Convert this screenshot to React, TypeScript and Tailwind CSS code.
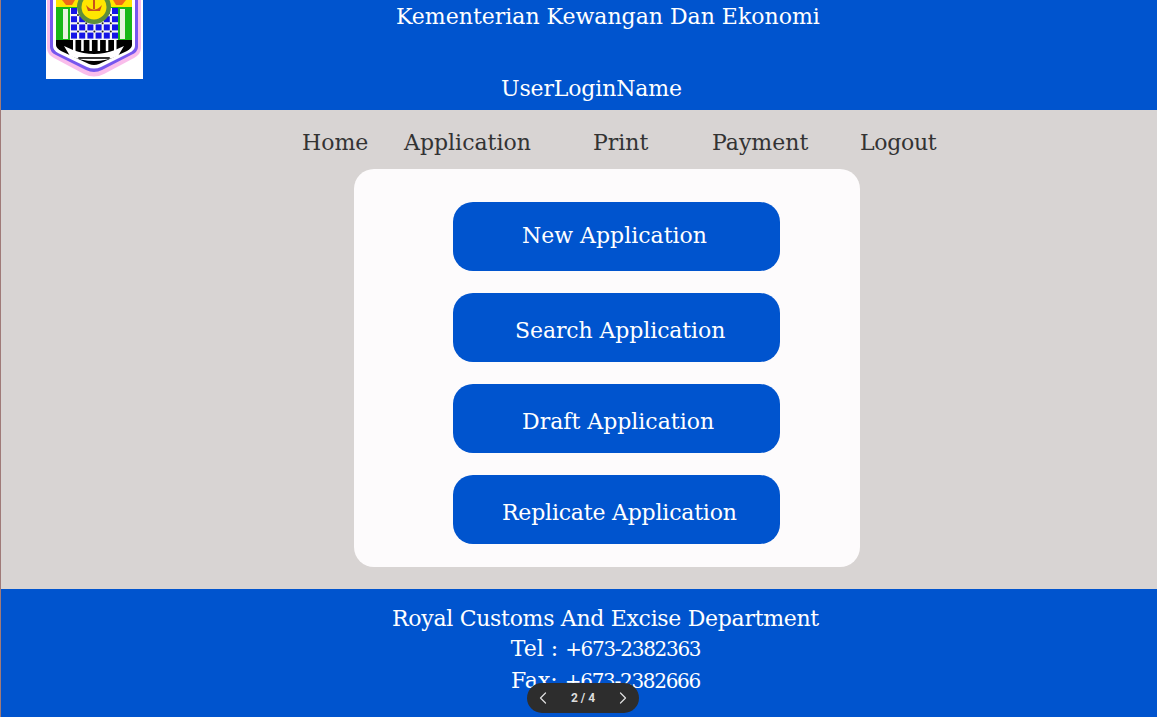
import React from "react";
import { ChevronLeft, ChevronRight } from "lucide-react";

const font = "font-['DejaVu_Serif',serif]";

const Logo: React.FC = () => (
  <svg width="97" height="79" viewBox="0 0 97 79" className="block blur-[0.4px]">
    <rect width="97" height="79" fill="#ffffff" />
    <path d="M1 0 V48 Q1 54 8 58 L38 74 Q48 79 58 74 L88 58 Q95 54 95 48 V0 Z" fill="#f9bdeb" />
    <path d="M4 0 V47 Q4 52 10 55 L40 70 Q48 74 56 70 L85 55 Q92 52 92 47 V0 Z" fill="#7657ee" />
    <path d="M7 0 V46 Q7 50 12 53 L41 67 Q48 70 55 67 L83 53 Q89 50 89 46 V0 Z" fill="#ffffff" />
    <path d="M10 0 H86 V45 Q86 48 81 51 L53 64 Q48 66 43 64 L15 51 Q10 48 10 45 Z" fill="#000000" />
    <rect x="10" y="0" width="76" height="8" fill="#ffe600" />
    <rect x="10" y="7" width="76" height="33" fill="#18b818" />
    <path d="M16 0 H29 L26 5 H20 Z" fill="#f06a18" />
    <path d="M67 0 H80 L76 5 H70 Z" fill="#f06a18" />
    <rect x="24" y="8" width="48" height="32" fill="#f4f4f4" />
    {[0, 1, 2, 3, 4, 5].map((c) =>
      [0, 1, 2, 3].map((r) => (
        <rect key={`${c}-${r}`} x={25 + c * 8.2} y={8 + r * 8.2} width="6" height="6" fill="#1414e6" />
      ))
    )}
    {[0, 1, 2, 3, 4].map((c) =>
      [0, 1, 2].map((r) => (
        <circle key={`${c}-${r}`} cx={32 + c * 8.2} cy={15 + r * 8.2} r="1" fill="#222222" />
      ))
    )}
    {[0, 1, 2, 3, 4, 5].map((c) => (
      <rect key={c} x={27 + c * 8.2} y="40" width="2.5" height="11" fill="#ffffff" />
    ))}
    <circle cx="48" cy="7" r="17" fill="#5f8f3a" />
    <circle cx="48" cy="7" r="12.5" fill="#ffe600" />
    <path d="M40 5 Q48 14 56 5 L54 11 H42 Z M47 0 H49 V9 H47 Z" fill="#c8501c" />
    <path d="M17 9 h5 v30 h-5 Z M74 9 h5 v30 h-5 Z" fill="#e8f3e0" />
    <path d="M18 46 L27 50 Q48 58 69 50 L78 46 L72 56 Q48 66 24 56 Z" fill="#ffffff" />
    <rect x="32" y="57" width="32" height="2" rx="1" fill="#333333" />
  </svg>
);

const navItems = [
  { label: "Home", cls: "w-[102px]" },
  { label: "Application", cls: "w-[189px]" },
  { label: "Print", cls: "w-[119px]" },
  { label: "Payment", cls: "w-[148px]" },
  { label: "Logout", cls: "tracking-[-0.3px]" },
];

const buttons = [
  { label: "New Application", cls: "pl-[69px] pb-[3px]" },
  { label: "Search Application", cls: "pl-[62px] pt-[5px] tracking-[-0.1px]" },
  { label: "Draft Application", cls: "pl-[69px] pt-[5px]" },
  { label: "Replicate Application", cls: "pl-[49px] pt-[5px] tracking-[-0.2px]" },
];

export default function App() {
  return (
    <div className={`relative h-[717px] overflow-hidden border-l border-[#a07a78] bg-[#d8d4d3] ${font}`}>
      <header className="relative h-[110px] overflow-hidden bg-[#0054ce] text-white">
        <div className="pl-[45px]">
          <Logo />
        </div>
        <div className="absolute left-[395px] top-[2px] text-[22px] leading-[30px] whitespace-nowrap">
          Kementerian Kewangan Dan Ekonomi
        </div>
        <div className="absolute left-[500px] top-[74px] text-[22px] leading-[30px] tracking-[-0.15px] whitespace-nowrap">
          UserLoginName
        </div>
      </header>

      <nav className="flex h-[59px] items-start pl-[301px] pt-[18px] text-[22px] leading-[30px] text-[#333333]">
        {navItems.map((n) => (
          <div key={n.label} className={n.cls}>
            {n.label}
          </div>
        ))}
      </nav>

      <main className="ml-[353px] flex h-[398px] w-[506px] flex-col items-center gap-[22px] rounded-[20px] bg-[#fdfbfc] pl-[19px] pt-[33px]">
        {buttons.map((b) => (
          <div
            key={b.label}
            className={`flex h-[69px] w-[327px] shrink-0 items-center rounded-[20px] bg-[#0054ce] text-[22px] text-white ${b.cls}`}
          >
            {b.label}
          </div>
        ))}
      </main>

      <footer className="mt-[22px] flex h-[128px] flex-col items-center bg-[#0054ce] pl-[53px] pt-[14px] text-[22px] leading-[31px] text-white">
        <div className="tracking-[-0.3px]">Royal Customs And Excise Department</div>
        <div className="-mt-[1px]">
          Tel : <span className="text-[20px] tracking-[-1.3px]">+673-2382363</span>
        </div>
        <div>
          Fax: <span className="text-[20px] tracking-[-1.3px]">+673-2382666</span>
        </div>
      </footer>

      <div className="absolute left-[526px] top-[683px] flex h-[30px] w-[112px] items-center justify-between rounded-full bg-[#2d2d2d] px-[6px] font-['Roboto',sans-serif] text-[12px] font-bold text-[#dddddd]">
        <ChevronLeft size={20} strokeWidth={1.5} />
        <span>2 / 4</span>
        <ChevronRight size={20} strokeWidth={1.5} />
      </div>
    </div>
  );
}
